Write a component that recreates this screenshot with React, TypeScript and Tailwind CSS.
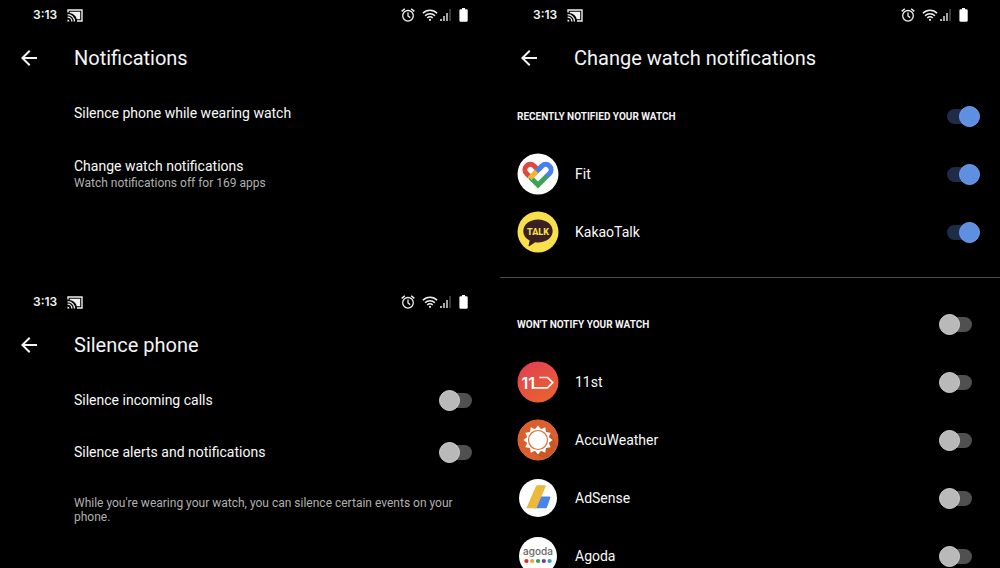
import { useState, type ReactNode } from 'react'
import { MdArrowBack } from 'react-icons/md'

const CastIcon = () => (
  <svg viewBox="0 0 16 13" className="h-[13px] w-4" aria-hidden="true">
    <path d="M1 3.5V1h14v11H10" fill="none" stroke="#f1f1f1" strokeWidth="1.4" />
    <path d="M2.8 2.8h10.4v7.4H9.8C8.8 6.6 6.4 4.4 2.8 4z" fill="#f1f1f1" />
    <path d="M.6 5.6a6.9 6.9 0 0 1 6.9 6.9M.6 8.2a4.3 4.3 0 0 1 4.3 4.3" fill="none" stroke="#f1f1f1" strokeWidth="1.3" />
    <path d="M.5 10.6a2 2 0 0 1 2 2h-2z" fill="#f1f1f1" />
  </svg>
)

const AlarmIcon = () => (
  <svg viewBox="0 0 14 14" className="size-3.5" fill="none" stroke="#f1f1f1" strokeWidth="1.3" aria-hidden="true">
    <circle cx="7" cy="7.8" r="5.3" />
    <path d="M.7 3.4 3.8.8M13.3 3.4 10.2.8" strokeWidth="1.5" />
    <path d="M7 4.6V8l2.2 1.6" />
  </svg>
)

const WifiIcon = () => (
  <svg viewBox="0 0 16 12" className="h-3 w-4" fill="none" stroke="#f1f1f1" strokeWidth="1.5" aria-hidden="true">
    <path d="M.9 4.3a10 10 0 0 1 14.2 0M3.1 6.7a6.9 6.9 0 0 1 9.8 0M5.3 9a3.8 3.8 0 0 1 5.4 0" />
    <circle cx="8" cy="10.8" r="1.1" fill="#f1f1f1" stroke="none" />
  </svg>
)

const SignalIcon = () => (
  <svg viewBox="0 0 11 12" className="h-3 w-[11px]" aria-hidden="true">
    <rect x="0" y="10" width="2" height="2" fill="#b5b5b5" />
    <rect x="3" y="7" width="2" height="5" fill="#a5a5a5" />
    <rect x="6" y="4" width="2" height="8" fill="#a5a5a5" />
    <rect x="9" y="0" width="2" height="12" fill="#383838" />
  </svg>
)

const BatteryIcon = () => (
  <svg viewBox="0 0 9 14" className="h-3.5 w-[9px]" aria-hidden="true">
    <path d="M3 0h3v1.2h1.5q1.2 0 1.2 1.2v10q0 1.4-1.4 1.4H1.8Q.4 13.8.4 12.4v-10Q.4 1.2 1.6 1.2H3z" fill="#fff" />
  </svg>
)

const FitIcon = () => (
  <svg viewBox="0 0 42 42" className="size-[42px]" aria-hidden="true">
    <circle cx="21" cy="21" r="20.5" fill="#fff" />
    <g fill="none" strokeWidth="5">
      <path d="M13 24 21 32 30 23" stroke="#3fa357" />
      <path d="m29.5 23.5 3-3a5.3 5.3 0 0 0-7.6-7.6L21 16.8" stroke="#4a80ed" />
      <path d="m12.5 23.5-3-3a5.3 5.3 0 0 1 7.6-7.6l4.6 4.6" stroke="#dc4a3d" />
      <path d="m25 13-7 7" stroke="#4a80ed" />
      <path d="M19.6 18.4 12.8 25.2" stroke="#f2b632" />
    </g>
  </svg>
)

const KakaoIcon = () => (
  <svg viewBox="0 0 42 42" className="size-[42px]" aria-hidden="true">
    <circle cx="21" cy="21" r="20.5" fill="#f7e04b" />
    <path d="M21 8.5c-8.3 0-14.7 5-14.7 11.5 0 4.2 2.4 7.5 6.3 9.4l-1 5.2c-.1.7.5.9 1 .5l5.7-3.9c.9.1 1.8.2 2.7.2 8.3 0 14.7-4.9 14.7-11.4S29.3 8.5 21 8.5z" fill="#3a2024" />
    <text x="21" y="23.5" textAnchor="middle" fontSize="9" fontWeight="800" fontFamily="Roboto, sans-serif" fill="#f7e04b">TALK</text>
  </svg>
)

const ElevenIcon = () => (
  <svg viewBox="0 0 42 42" className="size-[42px]" aria-hidden="true">
    <defs>
      <linearGradient id="eleven" x1="0" y1="0" x2="0.6" y2="1">
        <stop offset="0" stopColor="#e23d56" />
        <stop offset="1" stopColor="#e9612f" />
      </linearGradient>
    </defs>
    <circle cx="21" cy="21" r="20.5" fill="url(#eleven)" />
    <text x="4.5" y="27.5" fontSize="16" fontWeight="600" fontFamily="Inter, sans-serif" fill="#fff">11</text>
    <path d="M22.3 16.5h8.2l5.3 5.1-5.3 5.2H16.5" fill="none" stroke="#fff" strokeWidth="1.7" />
  </svg>
)

const rays = Array.from({ length: 12 }, (_, i) => i * 30)

const AccuWeatherIcon = () => (
  <svg viewBox="0 0 42 42" className="size-[42px]" aria-hidden="true">
    <circle cx="21" cy="21" r="20" fill="#d95f2e" stroke="#e8662f" />
    <path d="m32 12 7.8 13.5A20 20 0 0 1 27 39.6L13 32z" fill="#c95727" />
    {rays.map((angle) => (
      <path key={angle} d="M17.8 10.6 21 6.4l3.2 4.2z" fill="#fff" transform={`rotate(${angle} 21 21)`} />
    ))}
    <circle cx="21" cy="21" r="11.4" fill="#fff" />
    <circle cx="21" cy="21" r="9.5" fill="#fff" stroke="#dc6a35" strokeWidth="1.2" />
  </svg>
)

const AdSenseIcon = () => (
  <svg viewBox="0 0 42 42" className="size-[42px]" aria-hidden="true">
    <circle cx="21" cy="21" r="19" fill="#fff" />
    <path d="M22.5 19.5h9.8q1.6 0 1 1.6L30 30.2q-.4 1-1.4 1H17z" fill="#4b83ec" />
    <path d="M18.8 9.5q.6-1.3 2-1.3h7q1.4 0 .8 1.3L19.5 31.2H9.3z" fill="#ecb83e" />
  </svg>
)

const agodaDots = ['#e12a2f', '#f0a62c', '#31a24c', '#8d2ba6', '#2f9de0']

const AgodaIcon = () => (
  <svg viewBox="0 0 42 42" className="size-[42px]" aria-hidden="true">
    <circle cx="21" cy="21" r="19" fill="#fff" />
    <text x="21" y="20" textAnchor="middle" fontSize="10" fontWeight="500" fontFamily="Inter, sans-serif" fill="#666">agoda</text>
    {agodaDots.map((color, i) => (
      <circle key={color} cx={9.4 + i * 5.8} cy="26" r="2.1" fill={color} />
    ))}
  </svg>
)

function StatusBar() {
  return (
    <div className="flex h-[30px] items-center justify-between pr-8 pl-[33px]">
      <div className="flex items-center gap-2.5">
        <span className="font-[Inter,sans-serif] text-xs font-semibold text-gray-100">3:13</span>
        <CastIcon />
      </div>
      <div className="flex items-center">
        <AlarmIcon />
        <span className="ml-[7px]"><WifiIcon /></span>
        <span className="ml-0.5"><SignalIcon /></span>
        <span className="ml-2"><BatteryIcon /></span>
      </div>
    </div>
  )
}

function TitleBar({ title }: { title: string }) {
  return (
    <header className="flex h-14 items-center gap-[33px] pl-[17px]">
      <button type="button" aria-label="Back">
        <MdArrowBack className="size-6 text-gray-100" />
      </button>
      <h1 className="text-xl text-gray-100">{title}</h1>
    </header>
  )
}

type SwitchProps = { id: string; checked: boolean; onChange: () => void; label?: string }

function Switch({ id, checked, onChange, label }: SwitchProps) {
  return (
    <input
      id={id}
      type="checkbox"
      role="switch"
      aria-label={label}
      checked={checked}
      onChange={onChange}
      className="relative h-[21px] w-[41px] shrink-0 cursor-pointer appearance-none before:absolute before:inset-x-2 before:inset-y-[3px] before:rounded-full before:bg-[#505050] after:absolute after:top-0 after:left-0 after:size-[21px] after:rounded-full after:border after:border-[#d0d0d0] after:bg-[#b9b9b9] checked:before:bg-[#1e2c48] checked:after:left-5 checked:after:border-[#6fa0f2] checked:after:bg-[#5f8fe0]"
    />
  )
}

function SilenceRow({ id, label }: { id: string; label: string }) {
  const [on, setOn] = useState(false)
  return (
    <div className="flex h-[52px] items-center justify-between pr-5">
      <label htmlFor={id} className="text-sm text-gray-50">{label}</label>
      <Switch id={id} checked={on} onChange={() => setOn(!on)} />
    </div>
  )
}

type AppEntry = { name: string; icon: ReactNode }

const recentApps: AppEntry[] = [
  { name: 'Fit', icon: <FitIcon /> },
  { name: 'KakaoTalk', icon: <KakaoIcon /> },
]

const mutedApps: AppEntry[] = [
  { name: '11st', icon: <ElevenIcon /> },
  { name: 'AccuWeather', icon: <AccuWeatherIcon /> },
  { name: 'AdSense', icon: <AdSenseIcon /> },
  { name: 'Agoda', icon: <AgodaIcon /> },
]

function AppSection({ title, apps, initial }: { title: string; apps: AppEntry[]; initial: boolean }) {
  const [enabled, setEnabled] = useState(apps.map(() => initial))
  const allOn = enabled.every(Boolean)

  return (
    <section className="pt-px pr-5 pl-[17px]">
      <div className="flex h-[58px] items-center justify-between">
        <h2 className="text-[10px] font-bold text-gray-100">{title}</h2>
        <Switch id={title} label={title} checked={allOn} onChange={() => setEnabled(apps.map(() => !allOn))} />
      </div>
      <ul>
        {apps.map((app, i) => (
          <li key={app.name} className="flex h-[58px] items-center">
            {app.icon}
            <label htmlFor={app.name} className="ml-4 grow text-sm text-gray-50">{app.name}</label>
            <Switch
              id={app.name}
              checked={enabled[i]}
              onChange={() => setEnabled(enabled.map((value, n) => (n === i ? !value : value)))}
            />
          </li>
        ))}
      </ul>
    </section>
  )
}

export default function App() {
  return (
    <main className="grid h-screen grid-cols-2 overflow-hidden bg-black font-[Roboto,sans-serif]">
      <div>
        {/* Notifications */}
        <section className="pb-24">
          <StatusBar />
          <TitleBar title="Notifications" />
          <div className="flex flex-col items-start pt-px pl-[74px]">
            <button type="button" className="h-[52px] text-sm text-gray-50">Silence phone while wearing watch</button>
            <button type="button" className="flex h-[52px] flex-col justify-end text-left">
              <span className="text-sm leading-[18px] text-gray-50">Change watch notifications</span>
              <span className="text-xs leading-4 text-[#b0b0b0]">Watch notifications off for 169 apps</span>
            </button>
          </div>
        </section>

        {/* Silence phone */}
        <section>
          <StatusBar />
          <TitleBar title="Silence phone" />
          <div className="pt-px pl-[74px]">
            <SilenceRow id="calls" label="Silence incoming calls" />
            <SilenceRow id="alerts" label="Silence alerts and notifications" />
            <p className="mt-[18px] pr-8 text-xs leading-[14px] text-[#b0b0b0]">
              While you're wearing your watch, you can silence certain events on your phone.
            </p>
          </div>
        </section>
      </div>

      <div className="overflow-hidden">
        <StatusBar />
        <TitleBar title="Change watch notifications" />
        <AppSection title="RECENTLY NOTIFIED YOUR WATCH" apps={recentApps} initial={true} />
        <hr className="my-4 border-[#4a4a4a]" />
        <AppSection title="WON'T NOTIFY YOUR WATCH" apps={mutedApps} initial={false} />
      </div>
    </main>
  )
}
